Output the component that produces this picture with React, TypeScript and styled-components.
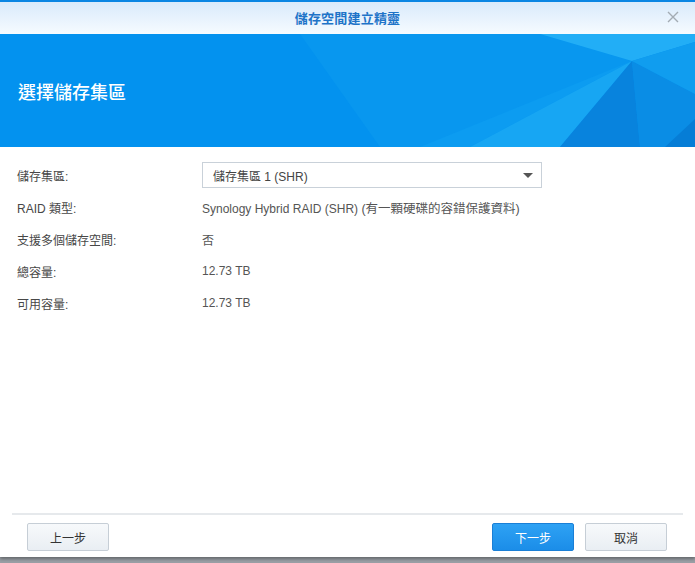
import React from "react";
import styled, { createGlobalStyle } from "styled-components";

const Global = createGlobalStyle`
  html, body { margin: 0; padding: 0; }
  body {
    width: 695px; height: 563px; overflow: hidden;
    background: #9a9fa5;
    font-family: "Liberation Sans", "Noto Sans CJK TC", sans-serif;
  }
`;

const Window = styled.div`
  width: 695px;
  height: 557px;
  background: #ffffff;
  display: flex;
  flex-direction: column;
  border-top: 2px solid #0a86e3;
  box-sizing: border-box;
  box-shadow: 0 2px 3px rgba(0,0,0,0.35);
`;

const TitleBar = styled.div`
  height: 32px;
  flex: none;
  position: relative;
  display: flex;
  align-items: center;
  justify-content: center;
  background: linear-gradient(#d9eafb, #f6fbff);
`;

const TitleText = styled.div`
  font-family: "Noto Sans CJK TC", sans-serif;
  font-size: 13px;
  font-weight: 700;
  color: #1f74c8;
  letter-spacing: 0.2px;
  margin-bottom: 2px;
`;

const Close = styled.div`
  position: absolute;
  right: 15px;
  top: 8px;
  width: 14px;
  height: 14px;
`;

const Banner = styled.div`
  height: 113px;
  flex: none;
  position: relative;
  overflow: hidden;
  background: #0392ef;
  display: flex;
  align-items: center;
  padding-left: 18px;
`;

const BannerArt = styled.svg`
  position: absolute;
  left: 0;
  top: 0;
`;

const BannerTitle = styled.h1`
  position: relative;
  margin: 0;
  font-family: "Noto Sans CJK TC", sans-serif;
  font-size: 18px;
  font-weight: 500;
  color: #ffffff;
`;

const Body = styled.div`
  flex: 1;
  padding: 12px 0 0 17px;
  display: flex;
  flex-direction: column;
`;

const Row = styled.div`
  display: grid;
  grid-template-columns: 185px 340px;
  align-items: center;
  height: 32px;
  font-size: 12px;
  color: #474747;
`;

const Label = styled.div``;

const Value = styled.div`
  color: #555;
  white-space: nowrap;
`;

const Cjk = styled.span`
  font-size: 12.5px;
`;

const Select = styled.div`
  height: 26px;
  box-sizing: border-box;
  border: 1px solid #c9d1d9;
  display: flex;
  align-items: center;
  justify-content: space-between;
  padding: 0 8px 0 10px;
  color: #444;
`;

const Caret = styled.div`
  width: 0;
  height: 0;
  border-left: 5px solid transparent;
  border-right: 5px solid transparent;
  border-top: 5px solid #555;
`;

const Footer = styled.div`
  flex: none;
  margin: 0 12px;
  border-top: 2px solid #e6e9ec;
  padding: 8px 16px 6px 15px;
  display: flex;
  align-items: center;
  gap: 11px;
`;

const Spacer = styled.div`
  flex: 1;
`;

const Button = styled.button<{ $primary?: boolean }>`
  width: 82px;
  height: 28px;
  border-radius: 2px;
  font-family: "Noto Sans CJK TC", sans-serif;
  font-size: 12px;
  cursor: pointer;
  border: 1px solid ${(p) => (p.$primary ? "#1a7fd6" : "#c6ced6")};
  background: ${(p) => (p.$primary ? "linear-gradient(#2ea2f4, #1b8de8)" : "linear-gradient(#f7f9fb, #e9eef3)")};
  color: ${(p) => (p.$primary ? "#ffffff" : "#333")};
`;

export default function App() {
  return (
    <>
      <Global />
      <Window>
        <TitleBar>
          <TitleText>儲存空間建立精靈</TitleText>
          <Close>
            <svg width="14" height="14" viewBox="0 0 14 14">
              <path d="M2 2 L12 12 M12 2 L2 12" stroke="#a3abb3" strokeWidth="1.4" />
            </svg>
          </Close>
        </TitleBar>
        <Banner>
          <BannerArt width="695" height="113" viewBox="0 0 695 113">
            <polygon points="300,0 540,0 632,27 470,113 380,113" fill="#0897ef" />
            <polygon points="420,113 632,27 470,113" fill="#0c9cf1" />
            <polygon points="470,113 632,27 560,113" fill="#17a6f3" />
            <polygon points="560,113 632,27 640,113" fill="#0883dd" />
            <polygon points="640,113 632,27 695,60 695,113" fill="#0a8de5" />
            <polygon points="540,0 695,0 695,8 632,27" fill="#22aef6" />
            <polygon points="695,8 632,27 695,60" fill="#109def" />
            <polygon points="665,113 695,85 695,113" fill="#067dd6" />
          </BannerArt>
          <BannerTitle>選擇儲存集區</BannerTitle>
        </Banner>
        <Body>
          <Row>
            <Label>儲存集區:</Label>
            <Select>
              <span>儲存集區 1 (SHR)</span>
              <Caret />
            </Select>
          </Row>
          <Row>
            <Label>RAID 類型:</Label>
            <Value>
              Synology Hybrid RAID (SHR) <Cjk>(有一顆硬碟的容錯保護資料)</Cjk>
            </Value>
          </Row>
          <Row>
            <Label>支援多個儲存空間:</Label>
            <Value>否</Value>
          </Row>
          <Row>
            <Label>總容量:</Label>
            <Value>12.73 TB</Value>
          </Row>
          <Row>
            <Label>可用容量:</Label>
            <Value>12.73 TB</Value>
          </Row>
        </Body>
        <Footer>
          <Button>上一步</Button>
          <Spacer />
          <Button $primary>下一步</Button>
          <Button>取消</Button>
        </Footer>
      </Window>
    </>
  );
}
